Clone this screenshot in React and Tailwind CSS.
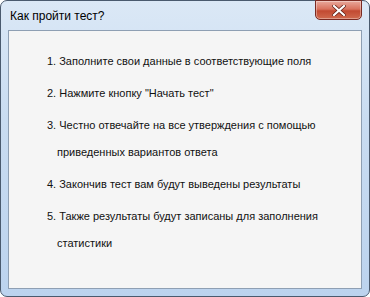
import React from "react";

const items = [
  ["1. Заполните свои данные в соответствующие поля"],
  ['2. Нажмите кнопку "Начать тест"'],
  ["3. Честно отвечайте на все утверждения с помощью", "приведенных вариантов ответа"],
  ["4. Закончив тест вам будут выведены результаты"],
  ["5. Также результаты будут записаны для заполнения", "статистики"],
];

export default function App() {
  return (
    <div className="w-[370px] h-[297px] bg-white">
      <div className="w-[370px] h-[297px] flex flex-col rounded-[7px] border border-[#4a5a6e] bg-[linear-gradient(180deg,#dbe8f6_0%,#c9dcf1_40%,#bcd3ee_100%)] pl-[7px] pr-[7px] pb-[7px] font-['Liberation_Sans',Arial,sans-serif]">
        <div className="h-[29px] flex items-start justify-between">
          <div className="pt-[8px] pl-[2px] text-[12px] leading-[15px] text-black">Как пройти тест?</div>
          <div className="mt-[-1px] mr-[0px] w-[47px] h-[20px] rounded-b-[5px] border border-[#7a2a22] bg-[linear-gradient(180deg,#e9a99c_0%,#d9725e_45%,#c24a32_55%,#d06a4e_100%)] flex items-center justify-center shadow-[inset_0_0_0_1px_rgba(255,255,255,0.35)]">
            <svg width="14" height="11" viewBox="0 0 14 11">
              <path d="M2 1 L12 10 M12 1 L2 10" stroke="#5a1a10" strokeWidth="3.6" strokeLinecap="square" />
              <path d="M2 1 L12 10 M12 1 L2 10" stroke="#ffffff" strokeWidth="2.2" strokeLinecap="square" />
            </svg>
          </div>
        </div>
        <div className="flex-1 border border-[#8e9fb3] bg-[#f5f5f5] pl-[38px] pt-[17px] flex flex-col gap-[5px] text-[11px] leading-[27px] text-[#111]">
          {items.map((lines, i) => (
            <div key={i} className="flex flex-col">
              {lines.map((l, j) => (
                <div key={j} className={j > 0 ? "pl-[10px]" : ""}>{l}</div>
              ))}
            </div>
          ))}
        </div>
      </div>
    </div>
  );
}
